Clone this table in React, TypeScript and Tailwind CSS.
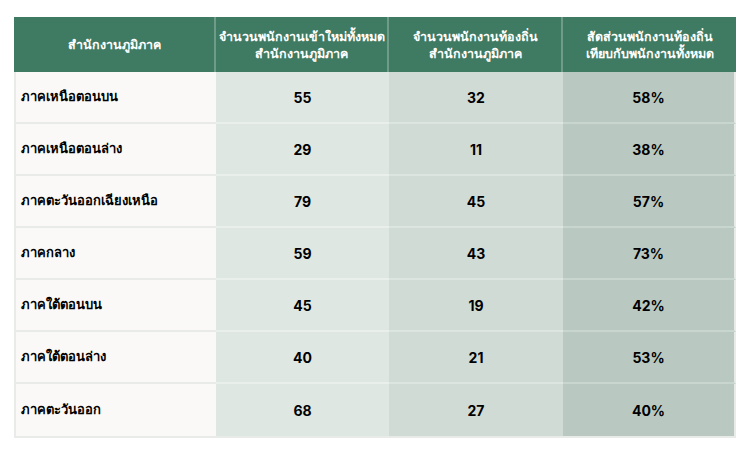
const rows = [
  { region: 'ภาคเหนือตอนบน', total: 55, local: 32, ratio: '58%' },
  { region: 'ภาคเหนือตอนล่าง', total: 29, local: 11, ratio: '38%' },
  { region: 'ภาคตะวันออกเฉียงเหนือ', total: 79, local: 45, ratio: '57%' },
  { region: 'ภาคกลาง', total: 59, local: 43, ratio: '73%' },
  { region: 'ภาคใต้ตอนบน', total: 45, local: 19, ratio: '42%' },
  { region: 'ภาคใต้ตอนล่าง', total: 40, local: 21, ratio: '53%' },
  { region: 'ภาคตะวันออก', total: 68, local: 27, ratio: '40%' },
];

export default function App() {
  return (
    <div className="w-[750px] h-[453px] bg-white pt-[17px] pl-[14px] font-['Noto_Sans',sans-serif]">
      <div className="w-[722px] border-b-2 border-[#e9ebe9]">
        {/* Header */}
        <div className="grid grid-cols-[202px_173px_174px_173px] h-[55px] bg-[#3f7a62] text-white text-[12.5px] font-semibold leading-[17px]">
          <div className="flex items-center justify-center border-r-2 border-white/25">สำนักงานภูมิภาค</div>
          <div className="flex items-center justify-center text-center border-r-2 border-white/25">
            จำนวนพนักงานเข้าใหม่ทั้งหมด<br />สำนักงานภูมิภาค
          </div>
          <div className="flex items-center justify-center text-center border-r-2 border-white/25">
            จำนวนพนักงานท้องถิ่น<br />สำนักงานภูมิภาค
          </div>
          <div className="flex items-center justify-center text-center">
            สัดส่วนพนักงานท้องถิ่น<br />เทียบกับพนักงานทั้งหมด
          </div>
        </div>

        {/* Body */}
        {rows.map((r, i) => (
          <div key={r.region} className="grid grid-cols-[202px_173px_174px_173px] h-[52px] text-[13px] font-bold text-black">
            <div className={`flex items-center pl-[5px] bg-[#faf9f7] border-l-2 border-[#e9ebe9] ${i < rows.length - 1 ? 'border-b-2' : ''}`}>
              {r.region}
            </div>
            <div className={`flex items-center justify-center bg-[#dfe7e2] ${i < rows.length - 1 ? 'border-b-2 border-b-[#e9efeb]' : ''}`}>
              <span className="font-['Inter',sans-serif] text-[14px]">{r.total}</span>
            </div>
            <div className={`flex items-center justify-center bg-[#d1dbd6] ${i < rows.length - 1 ? 'border-b-2 border-b-[#dde5e0]' : ''}`}>
              <span className="font-['Inter',sans-serif] text-[14px]">{r.local}</span>
            </div>
            <div className={`flex items-center justify-center bg-[#b9c9c1] border-r-2 border-r-[#e9ebe9] ${i < rows.length - 1 ? 'border-b-2 border-b-[#c9d5cf]' : ''}`}>
              <span className="font-['Inter',sans-serif] text-[14px]">{r.ratio}</span>
            </div>
          </div>
        ))}
      </div>
    </div>
  );
}
